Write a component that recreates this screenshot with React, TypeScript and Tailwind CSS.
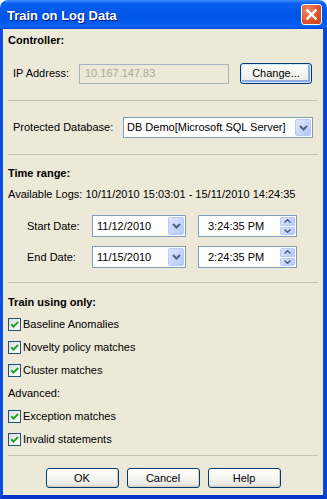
import React from "react";

const font = { fontFamily: '"Liberation Sans", Arial, sans-serif' };

function Sep() {
  return <div className="h-px bg-[#C5C2B2] w-full" />;
}

function Chevron() {
  return (
    <svg width="9" height="6" viewBox="0 0 9 6">
      <path d="M1 1 L4.5 4.5 L8 1" fill="none" stroke="#4D6185" strokeWidth="2" />
    </svg>
  );
}

function DropBtn() {
  return (
    <div className="w-[16px] self-stretch my-px mr-px flex items-center justify-center rounded-[2px] border border-[#B9CBF3] bg-[linear-gradient(135deg,#DCE6FD_0%,#C4D4FB_60%,#B4C7F7_100%)]">
      <Chevron />
    </div>
  );
}

function Spinner() {
  return (
    <div className="w-[15px] self-stretch my-px mr-px flex flex-col gap-px">
      <div className="flex-1 flex items-center justify-center rounded-t-[2px] border border-[#B9CBF3] bg-[linear-gradient(135deg,#DCE6FD_0%,#C4D4FB_60%,#B4C7F7_100%)]">
        <svg width="7" height="4" viewBox="0 0 7 4">
          <path d="M0.5 3.5 L3.5 0.7 L6.5 3.5" fill="none" stroke="#4D6185" strokeWidth="1.5" />
        </svg>
      </div>
      <div className="flex-1 flex items-center justify-center rounded-b-[2px] border border-[#B9CBF3] bg-[linear-gradient(135deg,#DCE6FD_0%,#C4D4FB_60%,#B4C7F7_100%)]">
        <svg width="7" height="4" viewBox="0 0 7 4">
          <path d="M0.5 0.5 L3.5 3.3 L6.5 0.5" fill="none" stroke="#4D6185" strokeWidth="1.5" />
        </svg>
      </div>
    </div>
  );
}

function Check({ label }: { label: string }) {
  return (
    <div className="h-[23px] flex items-center">
      <div className="w-[13px] h-[13px] border border-[#1C5180] bg-[linear-gradient(135deg,#DCDBD5_0%,#F4F4F1_60%,#FFFFFF_100%)] flex items-center justify-center">
        <svg width="9" height="9" viewBox="0 0 9 9">
          <path d="M1.2 4.2 L3.5 6.6 L8 2" fill="none" stroke="#21A121" strokeWidth="2" />
        </svg>
      </div>
      <span className="ml-[2px] text-black">{label}</span>
    </div>
  );
}

function Btn({ label, def }: { label: string; def?: boolean }) {
  return (
    <div
      className={
        "h-full flex items-center justify-center rounded-[3px] border border-[#003C74] bg-[linear-gradient(to_bottom,#FFFFFF_0%,#F7F7F4_40%,#ECEBE6_85%,#D6D0C5_100%)] text-black " +
        (def ? "shadow-[inset_0_0_0_1px_#CEE7FF,inset_-1px_-1px_0_2px_#89ADE4]" : "shadow-[inset_-1px_-1px_0_0_#D6D0C5]")
      }
    >
      {label}
    </div>
  );
}

export default function App() {
  return (
    <div className="w-[327px] h-[499px] bg-white text-[11px] leading-[13px]" style={font}>
      <div className="w-full h-full flex flex-col rounded-t-[8px] overflow-hidden">
        {/* Title bar */}
        <div className="h-[29px] flex items-center pl-[7px] pr-[5px] bg-[linear-gradient(to_bottom,#3D8FF8_0%,#0A60F0_12%,#0056E8_45%,#0058EC_78%,#0A64F6_90%,#0046D6_100%)]">
          <span className="text-white font-bold text-[13px] pt-px [text-shadow:1px_1px_0_#0A1883]">
            Train on Log Data
          </span>
          <div className="ml-auto w-[21px] h-[21px] rounded-[3px] border border-white bg-[radial-gradient(circle_at_30%_30%,#F08A6C_0%,#DD5430_55%,#C8401C_100%)] flex items-center justify-center">
            <svg width="11" height="11" viewBox="0 0 11 11">
              <path d="M1.5 1.5 L9.5 9.5 M9.5 1.5 L1.5 9.5" stroke="white" strokeWidth="2.4" strokeLinecap="square" />
            </svg>
          </div>
        </div>

        {/* Body */}
        <div className="flex-1 bg-[#ECE9D8] border-l-[3px] border-r-[4px] border-b-[4px] border-l-[#0A4FE0] border-r-[#0A47D6] border-b-[#0834C8] flex flex-col px-[5px] text-black">
          <div className="mt-[2px] h-[18px] flex items-center font-bold">Controller:</div>

          <div className="mt-[14px] h-[21px] flex items-center">
            <span className="ml-[5px] w-[66px]">IP Address:</span>
            <div className="w-[150px] h-[20px] border border-[#A9B2BF] flex items-center pl-[5px] text-[#ACA899]">
              10.167.147.83
            </div>
            <div className="ml-[11px] w-[72px] h-[21px]">
              <Btn label="Change..." def />
            </div>
          </div>

          <div className="mt-[16px]"><Sep /></div>

          <div className="mt-[16px] h-[21px] flex items-center">
            <span className="ml-[5px] w-[110px]">Protected Database:</span>
            <div className="w-[190px] h-[21px] border border-[#7F9DB9] bg-white flex items-center">
              <span className="pl-[3px] flex-1">DB Demo[Microsoft SQL Server]</span>
              <DropBtn />
            </div>
          </div>

          <div className="mt-[16px]"><Sep /></div>

          <div className="mt-[9px] h-[18px] flex items-center font-bold">Time range:</div>
          <div className="mt-[3px] h-[18px] flex items-center">
            Available Logs: 10/11/2010 15:03:01 - 15/11/2010 14:24:35
          </div>

          <div className="mt-[12px] h-[22px] flex items-center">
            <span className="ml-[19px] w-[65px]">Start Date:</span>
            <div className="w-[94px] h-[22px] border border-[#7F9DB9] bg-white flex items-center">
              <span className="pl-[4px] flex-1">11/12/2010</span>
              <DropBtn />
            </div>
            <div className="ml-[12px] w-[99px] h-[22px] border border-[#7F9DB9] bg-white flex items-center">
              <span className="pl-[9px] flex-1">3:24:35 PM</span>
              <Spinner />
            </div>
          </div>

          <div className="mt-[9px] h-[22px] flex items-center">
            <span className="ml-[19px] w-[65px]">End Date:</span>
            <div className="w-[94px] h-[22px] border border-[#7F9DB9] bg-white flex items-center">
              <span className="pl-[4px] flex-1">11/15/2010</span>
              <DropBtn />
            </div>
            <div className="ml-[12px] w-[99px] h-[22px] border border-[#7F9DB9] bg-white flex items-center">
              <span className="pl-[9px] flex-1">2:24:35 PM</span>
              <Spinner />
            </div>
          </div>

          <div className="mt-[14px]"><Sep /></div>

          <div className="mt-[10px] h-[18px] flex items-center font-bold">Train using only:</div>
          <div className="mt-[2px]">
            <Check label="Baseline Anomalies" />
            <Check label="Novelty policy matches" />
            <Check label="Cluster matches" />
            <div className="h-[23px] flex items-center">Advanced:</div>
            <Check label="Exception matches" />
            <Check label="Invalid statements" />
          </div>

          <div className="mt-[4px]"><Sep /></div>

          <div className="mt-[12px] h-[20px] flex justify-center gap-[8px]">
            <div className="w-[73px] h-full"><Btn label="OK" /></div>
            <div className="w-[73px] h-full"><Btn label="Cancel" /></div>
            <div className="w-[73px] h-full"><Btn label="Help" /></div>
          </div>
        </div>
      </div>
    </div>
  );
}
